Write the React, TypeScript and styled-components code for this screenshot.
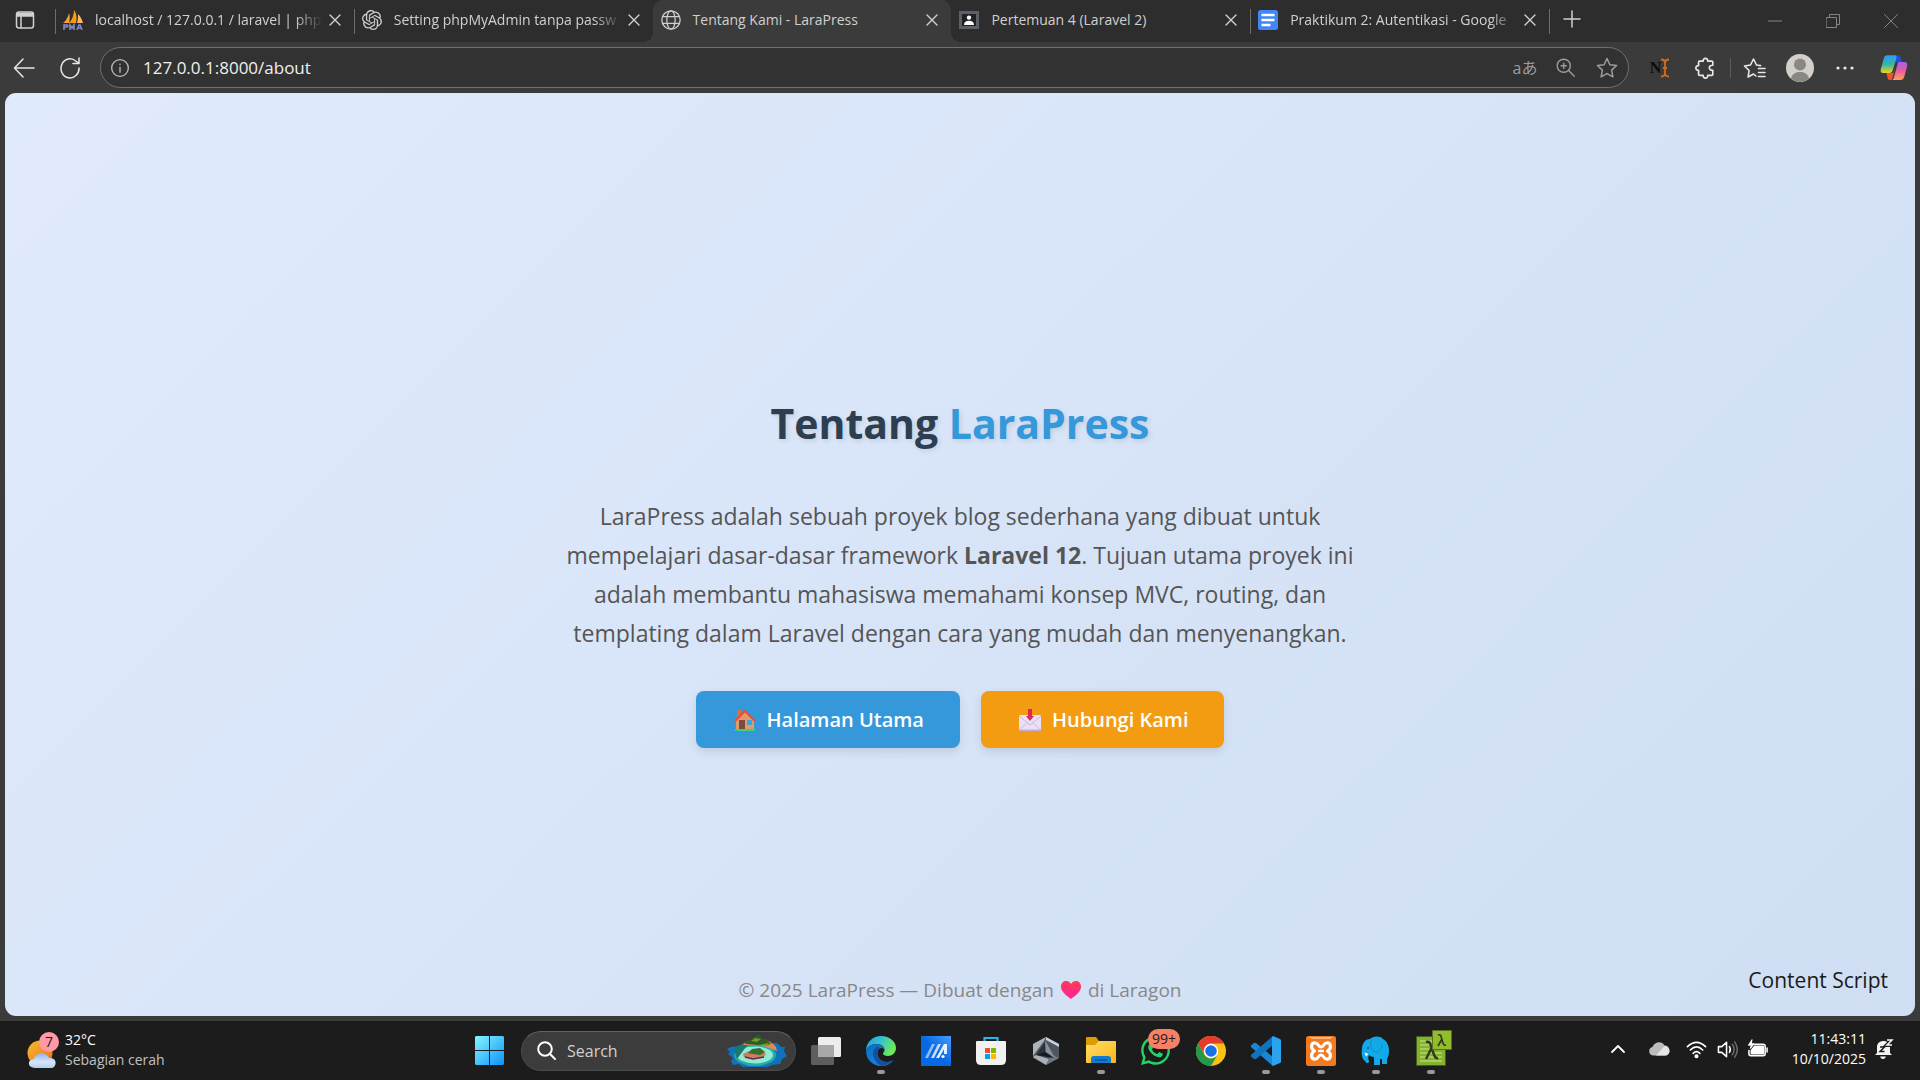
import React from "react";
import styled, { createGlobalStyle, css } from "styled-components";
import { SiOpenai } from "react-icons/si";
import { FaWhatsapp } from "react-icons/fa";

const GlobalStyle = createGlobalStyle`
  *, *::before, *::after { box-sizing: border-box; }
  body { margin: 0; background: #1c1c1c; }
  button, input { font: inherit; color: inherit; }
  body, #root { font-family: "Segoe UI", "Open Sans", "Noto Sans", "Noto Sans CJK JP", sans-serif; }
`;

const Desktop = styled.div`
  display: flex;
  flex-direction: column;
  min-height: 100vh;
  overflow: hidden;
`;

/* ---------- Browser ---------- */

const Browser = styled.div`
  flex: 1;
  display: flex;
  flex-direction: column;
  background: #3b3b3b;
`;

const plainButton = css`
  display: inline-flex;
  align-items: center;
  justify-content: center;
  flex: none;
  padding: 0;
  border: 0;
  background: none;
  cursor: pointer;
`;

const TabStrip = styled.header`
  display: flex;
  height: 42px;
  background: #2d2d2d;
  color: #d0d0d0;
`;

const TabMenu = styled.button`
  ${plainButton}
  width: 50px;
  padding-bottom: 2px;
`;

const Tabs = styled.nav`
  display: flex;
  flex: 0 1 1499px;
  min-width: 0;
  padding-left: 5px;
`;

const Tab = styled.div<{ $active?: boolean; $divider?: boolean }>`
  position: relative;
  flex: 0 1 299px;
  min-width: 0;
  display: flex;
  align-items: center;
  padding: 0 11px 2px 8px;
  ${(p) =>
    p.$divider &&
    css`
      &::before {
        content: "";
        position: absolute;
        left: 0;
        top: 9px;
        width: 1px;
        height: 25px;
        background: #6e6e6e;
      }
    `}
  ${(p) =>
    p.$active &&
    css`
      background: #3b3b3b;
      border-radius: 10px 10px 0 0;
      &::before,
      &::after {
        content: "";
        position: absolute;
        bottom: 0;
        width: 10px;
        height: 10px;
      }
      &::before {
        right: 100%;
        background: radial-gradient(circle at 0 0, transparent 10px, #3b3b3b 10px);
      }
      &::after {
        left: 100%;
        background: radial-gradient(circle at 100% 0, transparent 10px, #3b3b3b 10px);
      }
    `}
`;

const TabTitle = styled.button<{ $fade?: boolean }>`
  ${plainButton}
  flex: 1;
  min-width: 0;
  justify-content: flex-start;
  gap: 12px;
  font-size: 14px;
  line-height: 20px;
  white-space: nowrap;
  overflow: hidden;
  ${(p) => p.$fade && css`mask-image: linear-gradient(to left, transparent, #000 28px);`}
  svg { flex: none; }
`;

const TabClose = styled.button`
  ${plainButton}
  width: 16px;
  height: 20px;
  margin-left: 4px;
`;

const NewTab = styled.button`
  ${plainButton}
  width: 43px;
  height: 38px;
`;

const StripDivider = styled.span`
  width: 1px;
  height: 25px;
  margin-top: 9px;
  background: #6e6e6e;
`;

const WindowControls = styled.div`
  display: flex;
  margin-left: auto;
  color: #858585;
`;

const WindowButton = styled.button`
  ${plainButton}
  width: 58px;
  height: 42px;
`;

const Toolbar = styled.div`
  display: flex;
  align-items: center;
  height: 51px;
  color: #e8e8e8;
`;

const ToolButton = styled.button<{ $w?: number }>`
  ${plainButton}
  width: ${(p) => p.$w ?? 45}px;
  height: 40px;
`;

const AddressBar = styled.form`
  flex: 1;
  min-width: 0;
  display: flex;
  align-items: center;
  height: 41px;
  margin: 0 8px 0 9px;
  border: 1px solid #707070;
  border-radius: 21px;
  background: #323232;
  color: #9c9c9c;
`;

const InfoButton = styled(ToolButton)`
  color: #bdbdbd;
`;

const UrlInput = styled.input`
  flex: 1;
  min-width: 0;
  padding: 0 0 0 4px;
  border: 0;
  outline: 0;
  background: none;
  color: #f0f0f0;
  font-size: 17px;
  line-height: 24px;
`;

const Translate = styled.span`
  font-size: 16px;
  line-height: 20px;
`;

const ToolDivider = styled.span`
  width: 1px;
  height: 20px;
  margin: 0 1px 0 3px;
  background: #5c5c5c;
`;

const NIcon = styled.span`
  display: inline-flex;
  align-items: center;
  color: #0c0c0c;
  font: bold 16px/20px "Liberation Serif", serif;
`;

/* ---------- Web page ---------- */

const Viewport = styled.main`
  position: relative;
  flex: 1;
  display: flex;
  flex-direction: column;
  margin: 0 5px 5px;
  padding: 0 20px 12px;
  border-radius: 11px;
  background: linear-gradient(135deg, #e0eafc, #cfdef3);
  text-align: center;
`;

const Hero = styled.section`
  flex: 1;
  display: flex;
  flex-direction: column;
  align-items: center;
  justify-content: center;
  padding-top: 72px;
`;

const Heading = styled.h1`
  margin: 0 0 44px;
  color: #2c3e50;
  font-size: 41px;
  line-height: 60px;
  font-weight: 700;
  text-shadow: 2px 2px 5px rgba(0, 0, 0, 0.1);
`;

const Accent = styled.span`
  color: #3498db;
`;

const Intro = styled.p`
  max-width: 800px;
  margin: 0 0 38px;
  color: #555;
  font-size: 23px;
  line-height: 39px;
`;

const Actions = styled.div`
  display: flex;
  gap: 21px;
`;

const ActionLink = styled.a<{ $color: string }>`
  display: flex;
  align-items: center;
  gap: 11px;
  padding: 15px 36px 14px 38px;
  border-radius: 8px;
  background: ${(p) => p.$color};
  box-shadow: 0 4px 10px rgba(0, 0, 0, 0.1);
  color: #fff;
  font-size: 20px;
  line-height: 28px;
  font-weight: 600;
  text-decoration: none;
  white-space: nowrap;
`;

const PageFooter = styled.footer`
  display: flex;
  align-items: center;
  justify-content: center;
  gap: 7px;
  color: #888;
  font-size: 19px;
  line-height: 28px;
`;

const ScriptBadge = styled.div`
  position: absolute;
  right: 27px;
  bottom: 22px;
  color: #1a1a1a;
  font-size: 21px;
  line-height: 28px;
`;

/* ---------- Taskbar ---------- */

const Taskbar = styled.footer`
  display: grid;
  grid-template-columns: 1fr auto 1fr;
  height: 59px;
  background: #1c1c1c;
  color: #fff;
  font-size: 14px;
  line-height: 20px;
`;

const Weather = styled.button`
  ${plainButton}
  justify-self: start;
  gap: 5px;
  padding: 0 0 2px 26px;
  text-align: left;
`;

const Stack = styled.span`
  display: flex;
  flex-direction: column;
`;

const Muted = styled.span`
  color: #c0c0c0;
`;

const Dock = styled.div`
  display: flex;
  align-items: center;
`;

const DockButton = styled.button<{ $running?: boolean }>`
  ${plainButton}
  position: relative;
  width: 55px;
  height: 59px;
  ${(p) =>
    p.$running &&
    css`
      &::after {
        content: "";
        position: absolute;
        bottom: 6px;
        width: 8px;
        height: 4px;
        border-radius: 2px;
        background: #9a9a9a;
      }
    `}
`;

const Count = styled.span`
  position: absolute;
  left: 20px;
  top: 8px;
  padding: 0 4px;
  border-radius: 10px;
  background: #f78166;
  color: #1c1c1c;
  font-size: 14px;
  line-height: 20px;
`;

const SearchBox = styled.label`
  display: flex;
  align-items: center;
  width: 275px;
  height: 40px;
  margin: 0 2px 0 4px;
  padding: 0 8px 0 15px;
  border: 1px solid #4a4a4a;
  border-top-color: #626262;
  border-radius: 20px;
  background: #3c3c3c;
`;

const SearchInput = styled.input`
  flex: 1;
  min-width: 0;
  padding: 0 0 0 11px;
  border: 0;
  outline: 0;
  background: none;
  font-size: 16px;
  line-height: 24px;
  &::placeholder { color: #d0d0d0; opacity: 1; }
`;

const Tray = styled.div`
  display: flex;
  align-items: center;
  justify-self: end;
  padding: 0 18px 3px 0;
`;

const TrayButton = styled.button<{ $w?: number }>`
  ${plainButton}
  width: ${(p) => p.$w ?? 30}px;
  height: 40px;
`;

const Clock = styled.time`
  display: flex;
  flex-direction: column;
  min-width: 94px;
  text-align: right;
`;

/* ---------- Icons ---------- */

type LineProps = { size?: number; w?: number; box?: number; children: React.ReactNode };
const Line = ({ size = 20, w = 1.5, box = 24, children }: LineProps) => (
  <svg width={size} height={size} viewBox={`0 0 ${box} ${box}`} fill="none" stroke="currentColor" strokeWidth={w} strokeLinecap="round" strokeLinejoin="round" aria-hidden="true">
    {children}
  </svg>
);

const CloseGlyph = () => (
  <Line size={12} box={12} w={1.4}><path d="M1 1l10 10M11 1L1 11" /></Line>
);

const PmaIcon = () => (
  <svg width="20" height="20" viewBox="0 0 20 20" aria-hidden="true">
    <path d="M0 13C3 11 5 7 6 3c1 3 1 7 0 10z" fill="#f7a13a" />
    <path d="M6 13c3-3 5-8 5-13 3 4 3 9 2 13z" fill="#f89c0e" />
    <path d="M14 13c1-3 1-6 1-9 3 3 4 6 5 9z" fill="#fbb96a" />
    <path d="M1 20v-5h3l1 1-1 1H1M7 20v-5l2 3 2-3v5M14 20l2-5h1l2 5M15 18h4" fill="none" stroke="#8388c4" strokeWidth="1.6" />
  </svg>
);

const GlobeIcon = () => (
  <Line size={20} w={1.5}><circle cx="12" cy="12" r="11" /><ellipse cx="12" cy="12" rx="5" ry="11" /><path d="M2.500 8h19M2.500 16h19" /></Line>
);

const ClassroomIcon = () => (
  <svg width="20" height="20" viewBox="0 0 20 20" aria-hidden="true">
    <path d="M0 1h20v18H0z" fill="#5c6168" /><path d="M3 4h14v12H3z" fill="#202124" />
    <circle cx="10" cy="7.6" r="2.2" fill="#fff" /><path d="M5 15c0-3 2-4.300 5-4.300s5 1.300 5 4.300z" fill="#fff" />
  </svg>
);

const DocsIcon = () => (
  <svg width="20" height="20" viewBox="0 0 20 20" aria-hidden="true">
    <rect width="20" height="20" rx="2.500" fill="#4285f4" /><path d="M3.500 5h13M3.500 10h13M3.500 15h9" stroke="#fff" strokeWidth="2.400" />
  </svg>
);

const CopilotIcon = () => (
  <svg width="28" height="27" viewBox="0 0 30 28" aria-hidden="true">
    <defs>
      <linearGradient id="cpA" x1="0" y1="0" x2="0" y2="1"><stop offset="0" stopColor="#2a9df5" /><stop offset=".5" stopColor="#35b6a0" /><stop offset="1" stopColor="#f5d21b" /></linearGradient>
      <linearGradient id="cpB" x1="0" y1="0" x2="0" y2="1"><stop offset="0" stopColor="#a55cf0" /><stop offset=".5" stopColor="#ec5c9c" /><stop offset="1" stopColor="#fba25a" /></linearGradient>
    </defs>
    <path d="M14 1h5c2.500 0 3 2 3.500 4l.8 3H19c-2 0-3 1-3.500 3z" fill="#1f4fd8" />
    <path d="M7 20h6c2 0 2-2 3-4l-3 10c-.5 1.300-1.500 1.500-2.500 1.500C8 27.500 8 24 7 20z" fill="#f2532f" />
    <path d="M8 1h8c2 0 2 1.500 1.400 3.500L14 16c-.8 3-2 4-4 4H4C1 20 .3 18 1 15L4 4.500C4.800 2 6 1 8 1z" fill="url(#cpA)" />
    <path d="M20 8h6c3 0 3.700 2 3 5l-3 11c-.8 2.500-2 3.500-4 3.500h-9.500c1.500 0 2-1.500 2.500-3l3.500-13C19 9 19.200 8 20 8z" fill="url(#cpB)" />
  </svg>
);

const HouseIcon = () => (
  <svg width="22" height="22" viewBox="0 0 22 22" aria-hidden="true">
    <path d="M3 1h4v8H3z" fill="#c9784c" />
    <path d="M11 3l9 8v9H2v-9z" fill="#dd9c6c" />
    <path d="M5 11h6v9H5z" fill="#7d4a40" />
    <path d="M13 11h5v5h-5z" fill="#2fa8ee" />
    <path d="M1 12L11 2l10 10" fill="none" stroke="#ee4b35" strokeWidth="2.200" strokeLinejoin="round" />
    <path d="M1 20h20v2H1z" fill="#3bd07a" />
  </svg>
);

const MailIcon = () => (
  <svg width="22" height="22" viewBox="0 0 22 22" aria-hidden="true">
    <rect y="6" width="22" height="16" rx="1" fill="#eadff5" />
    <path d="M0 21l9-8M22 21l-9-8M0 7l11 9L22 7" fill="none" stroke="#cdbbdf" />
    <path d="M0 20.500h22V22H0z" fill="#c5a9e0" />
    <path d="M9 0h4v7h2l-4 5-4-5h2z" fill="#e0265c" />
  </svg>
);

const HeartIcon = () => (
  <svg width="20" height="18" viewBox="0 0 20 18" role="img" aria-label="cinta">
    <defs><linearGradient id="heart" x1="0" y1="0" x2="0" y2="1"><stop offset="0" stopColor="#fb3d4e" /><stop offset="1" stopColor="#ff22a4" /></linearGradient></defs>
    <path d="M10 18C5 14 0 11 0 5.500 0 2 2.500 0 5 0c2.200 0 4 1 5 3 1-2 2.800-3 5-3 2.500 0 5 2 5 5.500C20 11 15 14 10 18z" fill="url(#heart)" />
  </svg>
);

const WeatherIcon = () => (
  <svg width="34" height="38" viewBox="0 0 34 38" aria-hidden="true">
    <defs>
      <linearGradient id="sun" x1="0" y1="0" x2="1" y2="1"><stop offset="0" stopColor="#f4bd34" /><stop offset="1" stopColor="#ef6c10" /></linearGradient>
      <linearGradient id="cloud" x1="0" y1="0" x2="0" y2="1"><stop offset="0" stopColor="#8eb4f0" /><stop offset=".6" stopColor="#d8e5fa" /><stop offset="1" stopColor="#b3cbf5" /></linearGradient>
    </defs>
    <circle cx="14" cy="22" r="12.500" fill="url(#sun)" />
    <path d="M9 37c-8 0-8-9-1-9 1-7 13-8 15-1 9-1 8 10 2 10z" fill="url(#cloud)" />
    <circle cx="23" cy="11" r="10" fill="#ff99a4" />
    <text x="23" y="16" textAnchor="middle" fontSize="14" fill="#1c1c1c">7</text>
  </svg>
);

const StartIcon = () => (
  <svg width="29" height="29" viewBox="0 0 30 30" aria-hidden="true">
    <defs><linearGradient id="win" x1="0" y1="0" x2="1" y2="1"><stop offset="0" stopColor="#86f5ff" /><stop offset="1" stopColor="#0c92fb" /></linearGradient></defs>
    <path d="M1 0h13.500v14.500H0V1zM15.500 0H29l1 1v13.500H15.500zM0 15.500h14.500V30H1l-1-1zM15.500 15.500H30V29l-1 1H15.500z" fill="url(#win)" />
  </svg>
);

const IslandIcon = () => (
  <svg width="60" height="34" viewBox="0 0 60 34" aria-hidden="true">
    <path d="M4 13l8-1 4-3h34l4 4h4l-1 4 3 5-5 3-2 5-8 1-5 2H16l-4-3-6 1-2-4 2-3-5-4 2-2-3-3z" fill="#0f72bd" />
    <ellipse cx="28" cy="21" rx="21" ry="11" fill="#2aa9a4" />
    <ellipse cx="28" cy="21" rx="18" ry="8.500" fill="#8cecd4" />
    <path d="M7 16c3-5 10-7 15-7l-9 12-3 4z" fill="#1e776d" />
    <path d="M16 11c3-4 9-6 16-6 8 0 13 3 17 8l1 4-8-3-9-3z" fill="#dd8b5a" />
    <path d="M18 10c3-5 7-4 10-8 2-2 4-2 5 0 1 3 6 3 8 5l3 3-12 1z" fill="#2e5a24" />
    <path d="M24 7l4-3 6 1-4 3zM34 11l6-2 4 2-5 1z" fill="#6e9a30" />
    <path d="M16 20l6-3 13-1 4 4-3 4-13 1-6-2z" fill="#cf7d60" />
    <path d="M21 19l4-4 8-1 5 4-5 3-7-1z" fill="#35702a" />
    <path d="M18 23l8 2 11-2" fill="none" stroke="#5b2f55" strokeWidth="1.500" />
  </svg>
);

const TaskViewIcon = () => (
  <svg width="30" height="28" viewBox="0 0 30 28" aria-hidden="true">
    <rect x="7" width="23" height="20" rx="1.500" fill="#ededed" />
    <rect y="8" width="23" height="20" rx="1.500" fill="#5e5e5e" />
    <path d="M7 8h16v12H7z" fill="#a8a8a8" />
  </svg>
);

const EdgeIcon = () => (
  <svg width="30" height="30" viewBox="0 0 30 30" aria-hidden="true">
    <defs>
      <linearGradient id="eg1" x1="0" y1="0" x2="1" y2=".4"><stop offset="0" stopColor="#1c9be0" /><stop offset=".5" stopColor="#35c1d0" /><stop offset="1" stopColor="#6bea56" /></linearGradient>
      <linearGradient id="eg2" x1="0" y1="0" x2=".6" y2="1"><stop offset="0" stopColor="#0e6cc0" /><stop offset="1" stopColor="#1686dc" /></linearGradient>
    </defs>
    <path d="M0 15C0 6 7 0 15 0c9 0 15 6 15 12 0 5-4 8-8 8-3 0-5-1-5-2.500 0-1 1.500-1.500 1.500-3.500 0-3-3-6-7.500-6C5 8 1 11 0 15z" fill="url(#eg1)" />
    <path d="M0 15c1-4 5-7 11-7 4 0 7 3 7.500 6-.7-1.500-2-2-3-2-2.500 0-4 2-4 5 0 5 4 9 9 9 3 0 5-1 7-2-3 4-7 6-12 6C6 30 0 23 0 15z" fill="url(#eg2)" />
    <path d="M11 10.500C7 13 6 18 8 22c1.500 4 5 7 8 8 4-.5 8-2 11.500-6-2 1-4 2-7 2-5 0-9-4-9-9 0-3 1-4 2.500-5z" fill="#15509e" />
  </svg>
);

const AsusIcon = () => (
  <svg width="30" height="30" viewBox="0 0 30 30" aria-hidden="true">
    <defs><linearGradient id="asus" x1="0" y1="1" x2="1" y2="0"><stop offset=".5" stopColor="#0869e4" /><stop offset="1" stopColor="#4b9bff" /></linearGradient></defs>
    <path d="M0 0h30v30H0z" fill="url(#asus)" />
    <path d="M4 22l7-14h3L7 22z" fill="#8fbdf8" /><path d="M10 22l7-14h3l-7 14z" fill="#c3dcfc" />
    <path d="M15 22l8-14h3v10h-3v-5l-5 9z" fill="#e6f1ff" /><circle cx="22" cy="20.500" r="1.600" fill="#fff" />
  </svg>
);

const StoreIcon = () => (
  <svg width="30" height="30" viewBox="0 0 30 30" aria-hidden="true">
    <path d="M8.500 7V2h13v5" fill="none" stroke="#28b5ea" strokeWidth="2.200" />
    <path d="M0 6q0-1 1-1h28q1 0 1 1v18q0 5-5 5H5q-5 0-5-5z" fill="#f1f1f1" />
    <path d="M9 12h5v5H9z" fill="#f25022" /><path d="M15 12h5v5h-5z" fill="#7fba00" />
    <path d="M9 18h5v5H9z" fill="#00a4ef" /><path d="M15 18h5v5h-5z" fill="#ffb900" />
  </svg>
);

const ArmouryIcon = () => (
  <svg width="28" height="28" viewBox="0 0 28 28" aria-hidden="true">
    <path d="M14 0l13 7v14l-13 7-13-7V7z" fill="#4d555e" />
    <path d="M14 0L1 7v12l11-15z" fill="#a9b3bc" />
    <path d="M14 0l13 7v3L14 3z" fill="#c8cfd5" />
    <path d="M1 20l13 8 3-6-13-4z" fill="#aab2b9" />
    <path d="M14 28l13-7-6-3-4 4z" fill="#6f7882" />
    <path d="M13 5v10L4 18z" fill="#2b3239" /><path d="M13 15l9 6-18-3z" fill="#15191d" />
    <path d="M13 3l10 18-9-6z" fill="#89929b" />
  </svg>
);

const FolderIcon = () => (
  <svg width="30" height="27" viewBox="0 0 30 27" aria-hidden="true">
    <defs><linearGradient id="fold" x1="0" y1="0" x2="1" y2="1"><stop offset="0" stopColor="#ffdc6b" /><stop offset="1" stopColor="#fcb714" /></linearGradient></defs>
    <path d="M0 1q0-1 1-1h9l3 4h16q1 0 1 1v8H0z" fill="#dd9a04" />
    <path d="M0 8h9l4-4h16l1 1v20q0 1-1 1H1q-1 0-1-1z" fill="url(#fold)" />
    <path d="M5 26v-4q0-3 3-3h14q3 0 3 3v4z" fill="#107bd0" /><path d="M9 23h12" stroke="#07529b" strokeWidth="1.400" />
  </svg>
);

const ChromeIcon = () => (
  <svg width="30" height="30" viewBox="0 0 30 30" aria-hidden="true">
    <circle cx="15" cy="15" r="15" fill="#fbc116" />
    <path d="M2 7.500A15 15 0 0 1 28 7.500H15a7.500 7.500 0 0 0-6.500 11z" fill="#e33b2e" />
    <path d="M2 7.500l6.500 11.250A7.500 7.500 0 0 0 21.500 18.750L15 30A15 15 0 0 1 2 7.500z" fill="#269948" />
    <circle cx="15" cy="15" r="7.200" fill="#fff" /><circle cx="15" cy="15" r="5.800" fill="#1a6fea" />
  </svg>
);

const CodeIcon = () => (
  <svg width="30" height="30" viewBox="0 0 30 30" aria-hidden="true">
    <path d="M0 9.500L3 7q1-.5 2 0l17 14v9L0 11z" fill="#1688d4" /><path d="M0 20.500L3 23q1 .5 2 0L22 9V0L0 19z" fill="#0f74c0" />
    <path d="M22 0l7 3q1 .5 1 1.500v21q0 1-1 1.500l-7 3-1-1V1z" fill="#2ba3ef" />
  </svg>
);

const XamppIcon = () => (
  <svg width="30" height="30" viewBox="0 0 30 30" aria-hidden="true">
    <rect width="30" height="30" rx="2.500" fill="#f47a20" /><path d="M3 1h24l-3 2H6z" fill="#f9b483" />
    <path d="M8.500 15c-5-3-3-8.500 1-8 3 0 2.500 4 5.500 4s2.500-4 5.500-4c4-.5 6 5 1 8 5 3 3 8.500-1 8-3 0-2.500-4-5.500-4s-2.500 4-5.500 4c-4 .5-6-5-1-8z" fill="none" stroke="#fff" strokeWidth="3.200" strokeLinejoin="round" />
    <path d="M12 15h6" stroke="#fff" strokeWidth="2.500" />
  </svg>
);

const ElephantIcon = () => (
  <svg width="30" height="30" viewBox="0 0 30 30" aria-hidden="true">
    <path d="M9 3C12 0 19-.5 22 3c4 2 6 7 6 12 0 4-1 6-2 8v5h-5v-5h-2v6h-6v-8c-2 0-4-1-5-2-1 2-1 4 0 6 .5 2-3 3-4 0C1 23 0 18 1 13 1 8 4 3 9 3z" fill="#13a9e8" />
    <path d="M11 4c-3 4-1 11 4 12 4 0 6-4 6-8" fill="none" stroke="#0a8ccb" strokeWidth="1" />
    <path d="M3.500 16.500l4 1.500-2.500 2.500z" fill="#fff" /><circle cx="7" cy="12" r="1" fill="#075c88" />
  </svg>
);

const LambdaIcon = () => (
  <svg width="42" height="42" viewBox="-6 0 42 42" aria-hidden="true">
    <path d="M.5 6.500h29v29H.5z" fill="#83b32c" stroke="#465a20" />
    <path d="M4 11h18M4 15h22M4 19h22M4 23h22M4 27h22M4 31h22" stroke="#cce58e" />
    <path d="M10 12c4-1 4 1 6 7s3 10 6 9M16 17L10 29" fill="none" stroke="#2f3b1d" strokeWidth="2.500" />
    <path d="M16.500.5h19v19h-19z" fill="#90bd29" stroke="#5b6e23" />
    <path d="M22 5c3-1 3 1 4 5s2 6 4 5M26 9l-4 7" fill="none" stroke="#2f3b1d" strokeWidth="1.700" />
  </svg>
);

/* ---------- Page ---------- */

const tabs = [
  { title: "localhost / 127.0.0.1 / laravel | php", icon: <PmaIcon />, fade: true, divider: true },
  { title: "Setting phpMyAdmin tanpa passw", icon: <SiOpenai size={20} />, fade: true, divider: true },
  { title: "Tentang Kami - LaraPress", icon: <GlobeIcon />, active: true },
  { title: "Pertemuan 4 (Laravel 2)", icon: <ClassroomIcon /> },
  { title: "Praktikum 2: Autentikasi - Google", icon: <DocsIcon />, fade: true, divider: true },
];

const apps = [
  { name: "Task View", icon: <TaskViewIcon /> },
  { name: "Edge", icon: <EdgeIcon />, running: true },
  { name: "MyASUS", icon: <AsusIcon /> },
  { name: "Store", icon: <StoreIcon /> },
  { name: "Armoury Crate", icon: <ArmouryIcon /> },
  { name: "Explorer", icon: <FolderIcon />, running: true },
  { name: "WhatsApp", icon: <FaWhatsapp size={33} color="#25d366" />, count: "99+" },
  { name: "Chrome", icon: <ChromeIcon /> },
  { name: "VS Code", icon: <CodeIcon />, running: true },
  { name: "XAMPP", icon: <XamppIcon />, running: true },
  { name: "Laragon", icon: <ElephantIcon />, running: true },
  { name: "Lambda", icon: <LambdaIcon />, running: true },
];

const starPath = "M12 2.500l2.900 6.200 6.700.8-5 4.600 1.300 6.800L12 17.600l-5.900 3.300 1.300-6.800-5-4.600 6.700-.8z";

export default function App() {
  return (
    <Desktop>
      <GlobalStyle />
      <Browser>
        <TabStrip>
          <TabMenu aria-label="Tab actions">
            <Line size={20} box={20} w={1.500}><rect x="1.500" y="2" width="17" height="16" rx="2.500" /><path d="M2 3.500h16v2.500H2z" fill="currentColor" /><path d="M6 6v12" /></Line>
          </TabMenu>
          <Tabs>
            {tabs.map((t) => (
              <Tab key={t.title} $active={t.active} $divider={t.divider}>
                <TabTitle $fade={t.fade}>{t.icon}{t.title}</TabTitle>
                <TabClose aria-label="Close tab"><CloseGlyph /></TabClose>
              </Tab>
            ))}
          </Tabs>
          <StripDivider />
          <NewTab aria-label="New tab"><Line size={18} box={18} w={1.500}><path d="M9 1v16M1 9h16" /></Line></NewTab>
          <WindowControls>
            <WindowButton aria-label="Minimize"><Line size={14} box={14} w={1}><path d="M0 7h14" /></Line></WindowButton>
            <WindowButton aria-label="Restore"><Line size={14} box={14} w={1}><path d="M.5 3.500h10v10H.5zM3.500 3V.5h10v10H11" /></Line></WindowButton>
            <WindowButton aria-label="Close"><Line size={14} box={14} w={1}><path d="M.5.5l13 13M13.500.5l-13 13" /></Line></WindowButton>
          </WindowControls>
        </TabStrip>

        <Toolbar>
          <ToolButton $w={48} aria-label="Back"><Line size={22} box={22} w={1.500}><path d="M21 11H1.500M10 2L1.500 11l8.500 9" /></Line></ToolButton>
          <ToolButton $w={43} aria-label="Reload"><Line size={22} box={22} w={1.500}><path d="M20 11a9 9.500 0 1 1-4-7.500L19.500 6M20 1v5.500h-6" /></Line></ToolButton>
          <AddressBar>
            <InfoButton $w={38} type="button" aria-label="Site information"><Line size={20} w={1.600}><circle cx="12" cy="12" r="10" /><path d="M12 11v6M12 7.500v.2" /></Line></InfoButton>
            <UrlInput aria-label="Address" defaultValue="127.0.0.1:8000/about" />
            <ToolButton $w={40} type="button" aria-label="Translate"><Translate>aあ</Translate></ToolButton>
            <ToolButton $w={40} type="button" aria-label="Zoom"><Line size={21} w={1.600}><circle cx="10" cy="10" r="7.500" /><path d="M15.500 15.500l6.500 6.500M10 7v6M7 10h6" /></Line></ToolButton>
            <ToolButton $w={43} type="button" aria-label="Add to favorites"><Line size={24} w={1.500}><path d={starPath} /></Line></ToolButton>
          </AddressBar>
          <ToolButton aria-label="Text extension">
            <NIcon>N<svg width="8" height="20" viewBox="0 0 8 20" fill="none" stroke="#d8691d" strokeWidth="1.800"><path d="M0 1.500q4 0 4 3.500v10q0 3.500-4 3.500M8 1.500q-4 0-4 3.500M4 15q0 3.500 4 3.500M2 10h4" /></svg></NIcon>
          </ToolButton>
          <ToolButton aria-label="Extensions"><Line size={22} w={1.800}><path d="M6 4.500h4c-.5-4 5.500-4 5 0h4.500q1 0 1 1V9c-5-.5-5 6 0 5.500v4.500q0 1-1 1H15c.5 4-5.500 4-5 0H6q-1 0-1-1v-4.500c-4 .5-4-5.500 0-5V5.500q0-1 1-1z" /></Line></ToolButton>
          <ToolDivider />
          <ToolButton aria-label="Favorites"><Line size={24} w={1.600}><path d="M13 20l-2.500-2-5.400 3 1-6.500L1.500 10l6-1L10.500 3l3 6 4 .6M15.500 12.500H22M15.500 16.500H22M15.500 20.500H22" /></Line></ToolButton>
          <ToolButton aria-label="Profile">
            <svg width="28" height="28" viewBox="0 0 28 28"><circle cx="14" cy="14" r="14" fill="#d3d0cc" /><circle cx="14" cy="10.500" r="6" fill="#8b8783" /><path d="M5 24.500c1-5 5-6.500 9-6.500s8 1.500 9 6.500a14 14 0 0 1-18 0z" fill="#8b8783" /></svg>
          </ToolButton>
          <ToolButton aria-label="More"><svg width="18" height="4" viewBox="0 0 18 4" fill="currentColor"><circle cx="2" cy="2" r="1.600" /><circle cx="9" cy="2" r="1.600" /><circle cx="16" cy="2" r="1.600" /></svg></ToolButton>
          <ToolButton $w={53} aria-label="Copilot"><CopilotIcon /></ToolButton>
        </Toolbar>

        <Viewport>
          <Hero>
            <Heading>Tentang <Accent>LaraPress</Accent></Heading>
            <Intro>
              LaraPress adalah sebuah proyek blog sederhana yang dibuat untuk mempelajari dasar-dasar framework{" "}
              <strong>Laravel 12</strong>. Tujuan utama proyek ini adalah membantu mahasiswa memahami konsep MVC,
              routing, dan templating dalam Laravel dengan cara yang mudah dan menyenangkan.
            </Intro>
            <Actions>
              <ActionLink $color="#3498db" href="#home"><HouseIcon />Halaman Utama</ActionLink>
              <ActionLink $color="#f39c12" href="#contact"><MailIcon />Hubungi Kami</ActionLink>
            </Actions>
          </Hero>
          <PageFooter><span>© 2025 LaraPress — Dibuat dengan</span><HeartIcon /><span>di Laragon</span></PageFooter>
          <ScriptBadge>Content Script</ScriptBadge>
        </Viewport>
      </Browser>

      <Taskbar>
        <Weather>
          <WeatherIcon />
          <Stack><span>32°C</span><Muted>Sebagian cerah</Muted></Stack>
        </Weather>
        <Dock>
          <DockButton aria-label="Start"><StartIcon /></DockButton>
          <SearchBox>
            <Line size={19} box={19} w={2}><circle cx="8" cy="8" r="6.800" /><path d="M13 13l5 5" /></Line>
            <SearchInput aria-label="Search" placeholder="Search" />
            <IslandIcon />
          </SearchBox>
          {apps.map((a) => (
            <DockButton key={a.name} aria-label={a.name} $running={a.running}>
              {a.icon}
              {a.count && <Count>{a.count}</Count>}
            </DockButton>
          ))}
        </Dock>
        <Tray>
          <TrayButton $w={40} aria-label="Show hidden icons"><Line size={16} box={16} w={1.800}><path d="M2 11l6-6 6 6" /></Line></TrayButton>
          <TrayButton $w={42} aria-label="OneDrive">
            <svg width="21" height="14" viewBox="0 0 21 14"><path d="M4 13.500C-1 13-1 6 3.500 5 6-1 13-1 15.500 3.500 21 3 23 12 17 13.500z" fill="#bcbcbc" /><path d="M7 13.500L15.500 4c5 0 7 8 1.500 9.500z" fill="#e6e6e6" /></svg>
          </TrayButton>
          <TrayButton $w={32} aria-label="Wi-Fi"><Line size={21} box={22} w={1.700}><path d="M1.500 8q9.500-9 19 0M4.500 11.500q6.500-6.500 13 0M7.500 15q3.500-3.500 7 0" /><circle cx="11" cy="18" r="1.300" fill="currentColor" /></Line></TrayButton>
          <TrayButton aria-label="Volume"><Line size={21} box={22} w={1.600}><path d="M1.500 8H5l5-4.500v15L5 14H1.500z" /><path d="M13 8q2 3 0 6" /><path d="M16 5.500q4 5.500 0 11M18.500 3q5.500 8 0 16" stroke="#6a6a6a" /></Line></TrayButton>
          <TrayButton aria-label="Battery"><Line size={21} box={22} w={1.600}><path d="M8 5.500h9q2 0 2 2v8q0 2-2 2H4q-2 0-2-2V12M21 9.500v4" /><path d="M8 7.500h9v8H4.500V12z" fill="currentColor" /><path d="M5 1L1.500 6.500h3L3.500 10 7.500 5H5z" fill="currentColor" strokeWidth="1" /></Line></TrayButton>
          <Clock><span>11:43:11</span><span>10/10/2025</span></Clock>
          <TrayButton $w={36} aria-label="Notifications">
            <svg width="20" height="20" viewBox="0 0 20 20"><path d="M3 14V8c0-8 13-8 13 0v6l2 2H1z" fill="#f4f4f4" /><path d="M6 17.500h6q-1 2.500-3 2.500t-3-2.500z" fill="#f4f4f4" /><path d="M6 8h4.500L6 12.500h4.500" fill="none" stroke="#1c1c1c" strokeWidth="1.500" /><path d="M13 1h5l-5 5h5" fill="none" stroke="#1c1c1c" strokeWidth="4" /><path d="M13 1h5l-5 5h5" fill="none" stroke="#f4f4f4" strokeWidth="1.500" /></svg>
          </TrayButton>
        </Tray>
      </Taskbar>
    </Desktop>
  );
}
